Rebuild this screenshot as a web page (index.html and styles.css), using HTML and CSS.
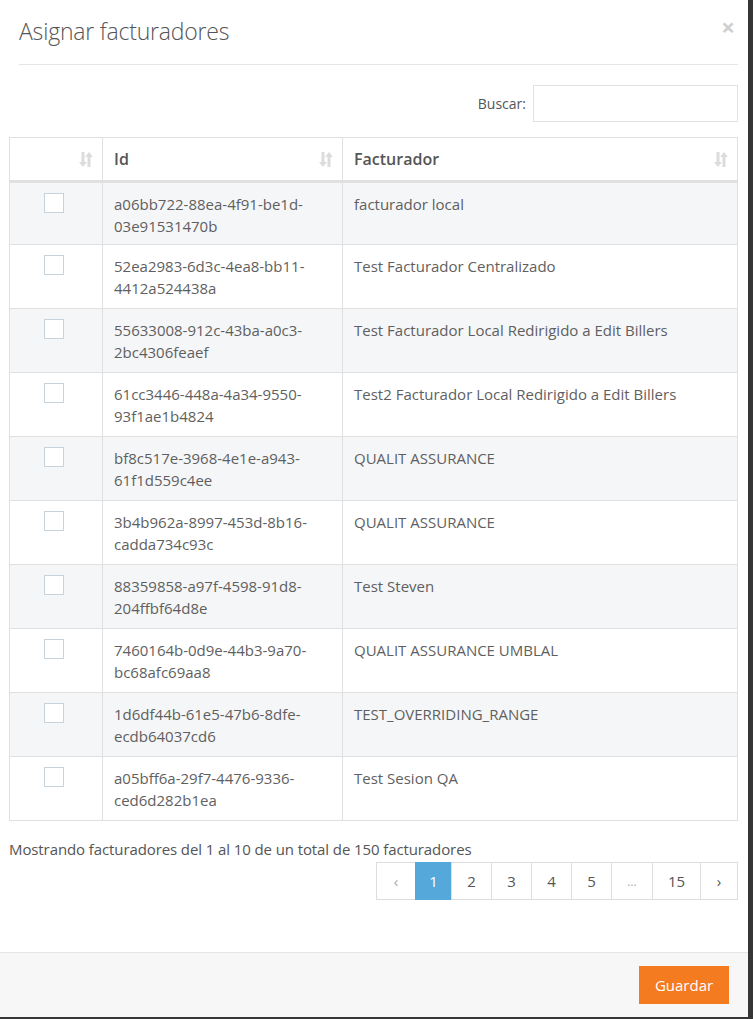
FILE: index.html
```html
<!DOCTYPE html>
<html lang="es">
<head>
  <meta charset="UTF-8">
  <meta name="viewport" content="width=device-width, initial-scale=1.0">
  <title>Asignar facturadores</title>
  <link rel="stylesheet" href="styles.css">
</head>
<body>
  <div class="modal">
    <div class="modal-header">
      <h4 class="modal-title">Asignar facturadores</h4>
      <span class="close">&times;</span>
    </div>
    <div class="modal-body">
      <div class="filter">
        <label>Buscar: <input type="search"></label>
      </div>
      <table class="grid">
        <colgroup>
          <col class="c-check"><col class="c-id"><col class="c-name">
        </colgroup>
        <thead>
          <tr>
            <th><div class="th"><span></span><svg class="sort" viewBox="0 0 14 17"><path d="M2.5 1h3v10h2.5L4 16 0 11h2.5z"/><path d="M11.5 16h-3V6H6L10 1l4 5h-2.5z"/></svg></div></th>
            <th><div class="th"><span>Id</span><svg class="sort" viewBox="0 0 14 17"><path d="M2.5 1h3v10h2.5L4 16 0 11h2.5z"/><path d="M11.5 16h-3V6H6L10 1l4 5h-2.5z"/></svg></div></th>
            <th><div class="th"><span>Facturador</span><svg class="sort" viewBox="0 0 14 17"><path d="M2.5 1h3v10h2.5L4 16 0 11h2.5z"/><path d="M11.5 16h-3V6H6L10 1l4 5h-2.5z"/></svg></div></th>
          </tr>
        </thead>
        <tbody>
          <tr><td class="chk"><span class="box"></span></td><td>a06bb722-88ea-4f91-be1d-<br>03e91531470b</td><td>facturador local</td></tr>
          <tr><td class="chk"><span class="box"></span></td><td>52ea2983-6d3c-4ea8-bb11-<br>4412a524438a</td><td>Test Facturador Centralizado</td></tr>
          <tr><td class="chk"><span class="box"></span></td><td>55633008-912c-43ba-a0c3-<br>2bc4306feaef</td><td>Test Facturador Local Redirigido a Edit Billers</td></tr>
          <tr><td class="chk"><span class="box"></span></td><td>61cc3446-448a-4a34-9550-<br>93f1ae1b4824</td><td>Test2 Facturador Local Redirigido a Edit Billers</td></tr>
          <tr><td class="chk"><span class="box"></span></td><td>bf8c517e-3968-4e1e-a943-<br>61f1d559c4ee</td><td>QUALIT ASSURANCE</td></tr>
          <tr><td class="chk"><span class="box"></span></td><td>3b4b962a-8997-453d-8b16-<br>cadda734c93c</td><td>QUALIT ASSURANCE</td></tr>
          <tr><td class="chk"><span class="box"></span></td><td>88359858-a97f-4598-91d8-<br>204ffbf64d8e</td><td>Test Steven</td></tr>
          <tr><td class="chk"><span class="box"></span></td><td>7460164b-0d9e-44b3-9a70-<br>bc68afc69aa8</td><td>QUALIT ASSURANCE UMBLAL</td></tr>
          <tr><td class="chk"><span class="box"></span></td><td>1d6df44b-61e5-47b6-8dfe-<br>ecdb64037cd6</td><td>TEST_OVERRIDING_RANGE</td></tr>
          <tr><td class="chk"><span class="box"></span></td><td>a05bff6a-29f7-4476-9336-<br>ced6d282b1ea</td><td>Test Sesion QA</td></tr>
        </tbody>
      </table>
      <div class="info">Mostrando facturadores del 1 al 10 de un total de 150 facturadores</div>
      <ul class="pagination">
        <li class="prev">&lsaquo;</li>
        <li class="active">1</li>
        <li>2</li>
        <li>3</li>
        <li>4</li>
        <li>5</li>
        <li class="dots">&hellip;</li>
        <li class="wide">15</li>
        <li class="next">&rsaquo;</li>
      </ul>
    </div>
    <div class="modal-footer">
      <button class="btn-save">Guardar</button>
    </div>
  </div>
</body>
</html>
```

FILE: styles.css
```css
body { margin: 0; background: #363636; font-family: "Open Sans", Arial, sans-serif; color: #555; }
.modal { width: 748px; height: 1017px; background: #fff; display: flex; flex-direction: column; }

.modal-header { position: relative; margin: 0 10px 0 19px; height: 65px; border-bottom: 1px solid #e5e5e5; box-sizing: border-box; }
.modal-title { margin: 0; padding-top: 14px; font-size: 23px; font-weight: 300; line-height: 34px; letter-spacing: -0.2px; color: #555; }
.close { position: absolute; right: 3px; top: 12px; font-size: 24px; font-weight: bold; color: #cfcfcf; line-height: 30px; }

.modal-body { flex: 1; padding: 20px 10px 0 9px; }
.filter { display: flex; justify-content: flex-end; }
.filter label { font-size: 14px; color: #555; display: flex; align-items: center; gap: 7px; }
.filter input { width: 205px; height: 37px; box-sizing: border-box; border: 1px solid #e2e2e2; outline: none; }

.grid { width: 100%; margin-top: 15px; border-collapse: collapse; font-size: 15px; }
.c-check { width: 93px; }
.c-id { width: 240px; }
.grid th, .grid td { border: 1px solid #e0e0e0; text-align: left; vertical-align: top; }
.grid th { height: 42px; padding: 0 9px 0 11px; font-weight: 600; font-size: 16px; color: #555; border-bottom: 3px solid #e0e0e0; box-sizing: border-box; }
.th { display: flex; justify-content: space-between; align-items: center; height: 42px; }
.sort { width: 14px; height: 17px; fill: #dcdcdc; }
.grid td { padding: 10px 11px 9px; line-height: 22px; color: #5f5f5f; }
.grid tbody tr:first-child td { padding-bottom: 7px; }
.grid tbody tr:nth-child(odd) td { background: #f5f6f8; }
.grid td.chk { text-align: center; padding-top: 10px; }
.box { display: inline-block; width: 18px; height: 18px; border: 1px solid #c6d2dc; background: #fff; margin-left: -5px; vertical-align: top; }

.info { margin-top: 17px; font-size: 15px; line-height: 22px; letter-spacing: -0.1px; color: #555; }
.pagination { display: flex; justify-content: flex-end; list-style: none; margin: 2px 0 0; padding: 0; }
.pagination li { height: 38px; width: 41px; box-sizing: border-box; border: 1px solid #ddd; margin-left: -1px; display: flex; align-items: center; justify-content: center; font-size: 15px; color: #555; }
.pagination .prev { color: #aaa; width: 40px; }
.pagination .active { background: #54a9da; border-color: #54a9da; color: #fff; width: 37px; }
.pagination .dots { color: #aaa; width: 42px; font-size: 12px; }
.pagination .wide { width: 49px; }
.pagination .next { width: 38px; }

.modal-footer { height: 65px; border-top: 1px solid #e5e5e5; background: #f7f7f7; display: flex; justify-content: flex-end; align-items: flex-start; padding: 13px 19px 0 0; box-sizing: border-box; }
.btn-save { width: 90px; height: 38px; border: 0; background: #f47b20; color: #fff; font-family: "Open Sans", Arial, sans-serif; font-size: 15px; }
```
